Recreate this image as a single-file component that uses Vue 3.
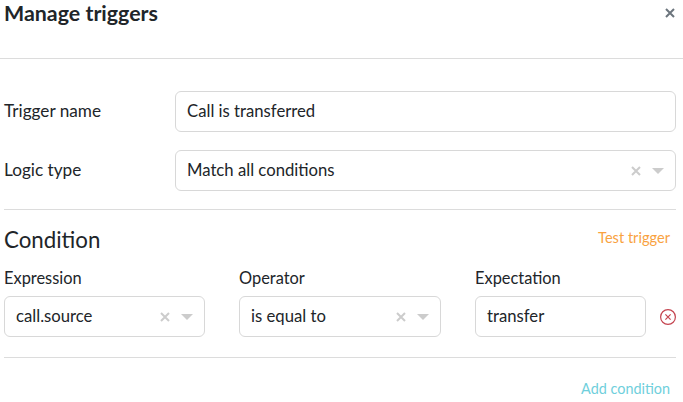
<script setup>
const conditions = [
  { expression: 'call.source', operator: 'is equal to', expectation: 'transfer' }
]
</script>

<template>
  <div class="modal">
    <header class="modal-header">
      <h1>Manage triggers</h1>
      <svg class="close" width="10" height="10" viewBox="0 0 10 10">
        <path d="M1 1l8 8M9 1l-8 8" />
      </svg>
    </header>

    <div class="modal-body">
      <div class="form-row">
        <label>Trigger name</label>
        <div class="control"><span class="value">Call is transferred</span></div>
      </div>
      <div class="form-row second">
        <label>Logic type</label>
        <div class="control select">
          <span class="value">Match all conditions</span>
          <span class="select-icons">
            <svg class="clear" width="10" height="10" viewBox="0 0 10 10"><path d="M1 1l8 8M9 1l-8 8" /></svg>
            <span class="caret"></span>
          </span>
        </div>
      </div>

      <hr />

      <div class="condition-head">
        <h2>Condition</h2>
        <a class="test">Test trigger</a>
      </div>

      <div class="condition" v-for="c in conditions" :key="c.expression">
        <div class="field expression">
          <label>Expression</label>
          <div class="control select">
            <span class="value">{{ c.expression }}</span>
            <span class="select-icons">
              <svg class="clear" width="10" height="10" viewBox="0 0 10 10"><path d="M1 1l8 8M9 1l-8 8" /></svg>
              <span class="caret"></span>
            </span>
          </div>
        </div>
        <div class="field operator">
          <label>Operator</label>
          <div class="control select">
            <span class="value">{{ c.operator }}</span>
            <span class="select-icons">
              <svg class="clear" width="10" height="10" viewBox="0 0 10 10"><path d="M1 1l8 8M9 1l-8 8" /></svg>
              <span class="caret"></span>
            </span>
          </div>
        </div>
        <div class="field expectation">
          <label>Expectation</label>
          <div class="control"><span class="value">{{ c.expectation }}</span></div>
        </div>
        <svg class="remove" width="16" height="16" viewBox="0 0 16 16">
          <circle cx="8" cy="8" r="7.4" />
          <path d="M5.4 5.4l5.2 5.2M10.6 5.4l-5.2 5.2" />
        </svg>
      </div>

      <hr class="lower" />

      <div class="add-row">
        <a class="add">Add condition</a>
      </div>
    </div>
  </div>
</template>

<style>
html, body {
  background: #fff;
  overflow: hidden;
}
</style>

<style scoped>
.modal {
  width: 683px;
  height: 402px;
  overflow: hidden;
  font-family: Lato, "Noto Sans", sans-serif;
  color: #212529;
  font-size: 16.4px;
}

.modal-header {
  height: 58px;
  border-bottom: 1px solid #dcdcdc;
  padding-left: 4px;
  padding-right: 8px;
  display: flex;
  justify-content: space-between;
  align-items: flex-start;
}

h1 {
  margin: 0;
  font-size: 21.4px;
  font-weight: 700;
  line-height: 26px;
}

.close {
  margin-top: 8px;
}

.close path {
  stroke: #6c757d;
  stroke-width: 2;
  fill: none;
}

.modal-body {
  padding: 32px 7px 0 4px;
}

.form-row {
  display: flex;
  align-items: center;
}

.form-row label {
  width: 171px;
  margin-bottom: 3px;
  font-size: 17.2px;
}

.form-row .control {
  flex: 1;
}

.second {
  margin-top: 18px;
}

.control {
  box-sizing: border-box;
  height: 41px;
  border: 1px solid #d8d8d8;
  border-radius: 6px;
  padding: 0 11px;
  display: flex;
  align-items: center;
  justify-content: space-between;
  line-height: 20px;
}

.value {
  font-size: 16.7px;
  margin-bottom: 1px;
}

.select-icons {
  display: flex;
  align-items: center;
  gap: 11px;
}

.clear path {
  stroke: #cccccc;
  stroke-width: 2;
  fill: none;
}

.caret {
  width: 0;
  height: 0;
  border-left: 6px solid transparent;
  border-right: 6px solid transparent;
  border-top: 6px solid #cccccc;
}

hr {
  border: none;
  border-top: 1px solid #dcdcdc;
  margin: 18px 0 0;
}

.condition-head {
  display: flex;
  justify-content: space-between;
  align-items: flex-start;
  margin-top: 16px;
}

h2 {
  margin: 0;
  font-size: 22.3px;
  font-weight: 400;
  line-height: 28px;
}

.test {
  color: #f9a23f;
  font-size: 14.6px;
  line-height: 18px;
  margin: 3px 6px 0 0;
}

.condition {
  display: flex;
  align-items: flex-end;
  margin-top: 14px;
}

.field label {
  display: block;
  line-height: 20px;
  margin-bottom: 8px;
}

.expression {
  width: 201px;
  margin-right: 34px;
}

.operator {
  width: 202px;
  margin-right: 34px;
}

.expectation {
  width: 171px;
}

.remove {
  margin: 0 0 12px 14px;
}

.remove circle {
  stroke: #c4444f;
  stroke-width: 1.2;
  fill: none;
}

.remove path {
  stroke: #c4444f;
  stroke-width: 1.2;
  fill: none;
}

.lower {
  margin-top: 20px;
}

.add-row {
  display: flex;
  justify-content: flex-end;
  margin-top: 22px;
}

.add {
  color: #6fcfdc;
  font-size: 14.4px;
  line-height: 18px;
  margin-right: 6px;
}
</style>
